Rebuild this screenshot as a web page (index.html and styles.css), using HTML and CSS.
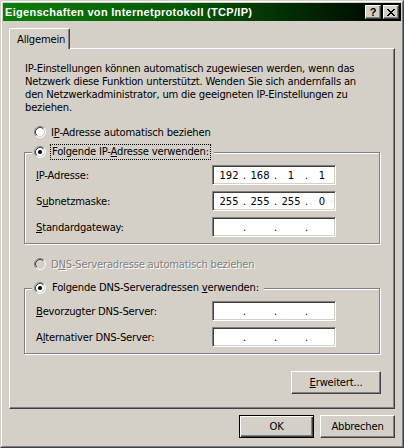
FILE: index.html
```html
<!DOCTYPE html>
<html lang="de">
<head>
<meta charset="utf-8">
<title>Eigenschaften von Internetprotokoll (TCP/IP)</title>
<link rel="stylesheet" href="styles.css">
</head>
<body>
<div class="window">
  <div class="frame">
    <div class="titlebar">
      <span class="title">Eigenschaften von Internetprotokoll (TCP/IP)</span>
      <div class="capbtns">
        <span class="capbtn help">?</span>
        <span class="capbtn close"><svg width="8" height="7" viewBox="0 0 8 7" shape-rendering="crispEdges"><path fill="#000" d="M0 0h2v1h-2z M6 0h2v1h-2z M1 1h2v1h-2z M5 1h2v1h-2z M2 2h4v1h-4z M3 3h2v1h-2z M2 4h4v1h-4z M1 5h2v1h-2z M5 5h2v1h-2z M0 6h2v1h-2z M6 6h2v1h-2z"/></svg></span>
      </div>
    </div>
    <div class="client">
      <div class="tabs"><div class="tab">Allgemein</div></div>
      <div class="panel">
        <p class="intro">IP-Einstellungen können automatisch zugewiesen werden, wenn das<br>Netzwerk diese Funktion unterstützt. Wenden Sie sich andernfalls an<br>den Netzwerkadministrator, um die geeigneten IP-Einstellungen zu<br>beziehen.</p>

        <div class="radio opt1">
          <svg class="rb" width="12" height="12" viewBox="0 0 12 12"><circle cx="6" cy="6" r="4.2" fill="#fff"/><path d="M2.11 9.89A5.5 5.5 0 0 1 9.89 2.11" fill="none" stroke="#808080"/><path d="M9.89 2.11A5.5 5.5 0 0 1 2.11 9.89" fill="none" stroke="#fff"/><path d="M2.82 9.18A4.5 4.5 0 0 1 9.18 2.82" fill="none" stroke="#404040"/><path d="M9.18 2.82A4.5 4.5 0 0 1 2.82 9.18" fill="none" stroke="#d4d0c8"/></svg>
          <span class="txt">I<u>P</u>-Adresse automatisch beziehen</span>
        </div>

        <div class="group g1">
          <div class="radio legend">
            <svg class="rb" width="12" height="12" viewBox="0 0 12 12"><circle cx="6" cy="6" r="4.2" fill="#fff"/><path d="M2.11 9.89A5.5 5.5 0 0 1 9.89 2.11" fill="none" stroke="#808080"/><path d="M9.89 2.11A5.5 5.5 0 0 1 2.11 9.89" fill="none" stroke="#fff"/><path d="M2.82 9.18A4.5 4.5 0 0 1 9.18 2.82" fill="none" stroke="#404040"/><path d="M9.18 2.82A4.5 4.5 0 0 1 2.82 9.18" fill="none" stroke="#d4d0c8"/><circle cx="6" cy="6" r="2" fill="#000"/></svg>
            <span class="txt focus">Folgende IP-<u>A</u>dresse verwenden:</span>
          </div>
          <div class="row">
            <span class="lbl"><u>I</u>P-Adresse:</span>
            <div class="ip"><span class="seg">192</span><span class="dot">.</span><span class="seg">168</span><span class="dot">.</span><span class="seg">1</span><span class="dot">.</span><span class="seg">1</span></div>
          </div>
          <div class="row">
            <span class="lbl">S<u>u</u>bnetzmaske:</span>
            <div class="ip"><span class="seg">255</span><span class="dot">.</span><span class="seg">255</span><span class="dot">.</span><span class="seg">255</span><span class="dot">.</span><span class="seg">0</span></div>
          </div>
          <div class="row">
            <span class="lbl"><u>S</u>tandardgateway:</span>
            <div class="ip"><span class="seg"></span><span class="dot">.</span><span class="seg"></span><span class="dot">.</span><span class="seg"></span><span class="dot">.</span><span class="seg"></span></div>
          </div>
        </div>

        <div class="radio opt3 disabled">
          <svg class="rb" width="12" height="12" viewBox="0 0 12 12"><circle cx="6" cy="6" r="4.2" fill="#d4d0c8"/><path d="M2.11 9.89A5.5 5.5 0 0 1 9.89 2.11" fill="none" stroke="#808080"/><path d="M9.89 2.11A5.5 5.5 0 0 1 2.11 9.89" fill="none" stroke="#fff"/><path d="M2.82 9.18A4.5 4.5 0 0 1 9.18 2.82" fill="none" stroke="#404040"/><path d="M9.18 2.82A4.5 4.5 0 0 1 2.82 9.18" fill="none" stroke="#d4d0c8"/></svg>
          <span class="txt">D<u>N</u>S-Serveradresse automatisch beziehen</span>
        </div>

        <div class="group g2">
          <div class="radio legend">
            <svg class="rb" width="12" height="12" viewBox="0 0 12 12"><circle cx="6" cy="6" r="4.2" fill="#fff"/><path d="M2.11 9.89A5.5 5.5 0 0 1 9.89 2.11" fill="none" stroke="#808080"/><path d="M9.89 2.11A5.5 5.5 0 0 1 2.11 9.89" fill="none" stroke="#fff"/><path d="M2.82 9.18A4.5 4.5 0 0 1 9.18 2.82" fill="none" stroke="#404040"/><path d="M9.18 2.82A4.5 4.5 0 0 1 2.82 9.18" fill="none" stroke="#d4d0c8"/><circle cx="6" cy="6" r="2" fill="#000"/></svg>
            <span class="txt nofocus">Folgende DNS-Serveradressen <u>v</u>erwenden:</span>
          </div>
          <div class="row">
            <span class="lbl"><u>B</u>evorzugter DNS-Server:</span>
            <div class="ip"><span class="seg"></span><span class="dot">.</span><span class="seg"></span><span class="dot">.</span><span class="seg"></span><span class="dot">.</span><span class="seg"></span></div>
          </div>
          <div class="row">
            <span class="lbl">A<u>l</u>ternativer DNS-Server:</span>
            <div class="ip"><span class="seg"></span><span class="dot">.</span><span class="seg"></span><span class="dot">.</span><span class="seg"></span><span class="dot">.</span><span class="seg"></span></div>
          </div>
        </div>

        <div class="advrow">
          <button class="btn adv" type="button"><u>E</u>rweitert...</button>
        </div>
      </div>
      <div class="buttons">
        <button class="btn default" type="button">OK</button>
        <button class="btn" type="button">Abbrechen</button>
      </div>
    </div>
  </div>
</div>
</body>
</html>
```
FILE: styles.css
```css
* { box-sizing: border-box; }
html, body { margin: 0; padding: 0; }
body {
  width: 404px;
  height: 448px;
  overflow: hidden;
  background: #d4d0c8;
  font-family: "DejaVu Sans", "Liberation Sans", sans-serif;
  font-size: 10px;
  letter-spacing: -0.2px;
  color: #000;
}
.window {
  width: 404px;
  height: 448px;
  border: 1px solid;
  border-color: #d4d0c8 #404040 #404040 #d4d0c8;
  background: #d4d0c8;
}
.frame {
  height: 100%;
  border: 1px solid;
  border-color: #fff #808080 #808080 #fff;
  padding: 1px;
  display: flex;
  flex-direction: column;
}
.titlebar {
  flex: none;
  height: 18px;
  display: flex;
  align-items: center;
  justify-content: space-between;
  padding: 0 2px;
  background: linear-gradient(to right, #0a7d0a 0%, #075807 45%, #000 100%);
}
.title {
  color: #fff;
  font-family: "Liberation Sans", sans-serif;
  font-weight: bold;
  font-size: 11px;
  letter-spacing: 0.3px;
  white-space: nowrap;
}
.capbtns { display: flex; gap: 2px; }
.capbtn {
  width: 16px;
  height: 14px;
  background: #d4d0c8;
  border: 1px solid;
  border-color: #fff #404040 #404040 #fff;
  box-shadow: inset -1px -1px #808080;
  display: flex;
  align-items: center;
  justify-content: center;
}
.help {
  font-family: "Liberation Sans", sans-serif;
  font-weight: bold;
  font-size: 11px;
  letter-spacing: 0;
  line-height: 12px;
}
.client {
  flex: 1;
  padding: 7px 6px 0;
  display: flex;
  flex-direction: column;
}
.tabs { display: flex; height: 20px; flex: none; }
.tab {
  position: relative;
  z-index: 1;
  width: 61px;
  height: 21px;
  border: 1px solid;
  border-bottom: none;
  border-color: #fff #404040 transparent #fff;
  box-shadow: inset -1px 0 #808080;
  border-radius: 2px 2px 0 0;
  background: #d4d0c8;
  padding: 2px 0 0 7px;
  line-height: 17px;
}
.panel {
  flex: none;
  height: 361px;
  border: 1px solid;
  border-color: #fff #404040 #404040 #fff;
  box-shadow: inset -1px -1px #808080;
}
.intro {
  margin: 13px 0 0 15px;
  line-height: 13px;
  white-space: nowrap;
}
.radio {
  display: flex;
  align-items: center;
  height: 16px;
  gap: 5px;
  white-space: nowrap;
}
.rb { flex: none; }
.opt1 { margin: 10px 0 0 24px; }
.opt3 { margin: 12px 0 0 24px; }
.disabled .txt { color: #808080; text-shadow: 1px 1px 0 #fff; }
.group {
  width: 356px;
  margin-left: 14px;
  border: 1px solid #808080;
  box-shadow: inset 1px 1px #fff, 1px 1px #fff;
  padding-bottom: 6px;
}
.g1 { margin-top: 12px; }
.g2 { margin-top: 16px; }
.legend {
  width: fit-content;
  margin: -9px 0 0 7px;
  padding: 0 3px 0 2px;
  gap: 4px;
  background: #d4d0c8;
}
.focus, .nofocus {
  border: 1px dotted #000;
  padding: 0 1px 0 1px;
  line-height: 14px;
}
.nofocus { border-color: transparent; }
.row {
  display: flex;
  align-items: center;
  height: 20px;
  margin-top: 6px;
  padding-left: 11px;
}
.legend + .row { margin-top: 5px; }
.lbl { width: 176px; white-space: nowrap; }
.ip {
  width: 124px;
  height: 20px;
  background: #fff;
  border: 1px solid;
  border-color: #808080 #fff #fff #808080;
  box-shadow: inset 1px 1px #404040, inset -1px -1px #d4d0c8;
  display: flex;
  align-items: center;
  padding-left: 4px;
  letter-spacing: 0;
}
.seg { width: 24px; text-align: center; }
.dot { width: 7px; text-align: center; }
.advrow {
  width: 357px;
  margin: 17px 0 0 14px;
  display: flex;
  justify-content: flex-end;
}
.btn {
  width: 75px;
  height: 23px;
  margin: 0;
  padding: 0;
  font: inherit;
  letter-spacing: inherit;
  color: #000;
  background: #d4d0c8;
  border: 1px solid;
  border-color: #fff #404040 #404040 #fff;
  box-shadow: inset -1px -1px #808080;
  border-radius: 0;
}
.adv { width: 90px; }
.default {
  border: 1px solid #000;
  box-shadow: inset 1px 1px #fff, inset -1px -1px #404040, inset -2px -2px #808080;
}
.buttons {
  display: flex;
  justify-content: flex-end;
  gap: 6px;
  margin-top: 6px;
}
```
